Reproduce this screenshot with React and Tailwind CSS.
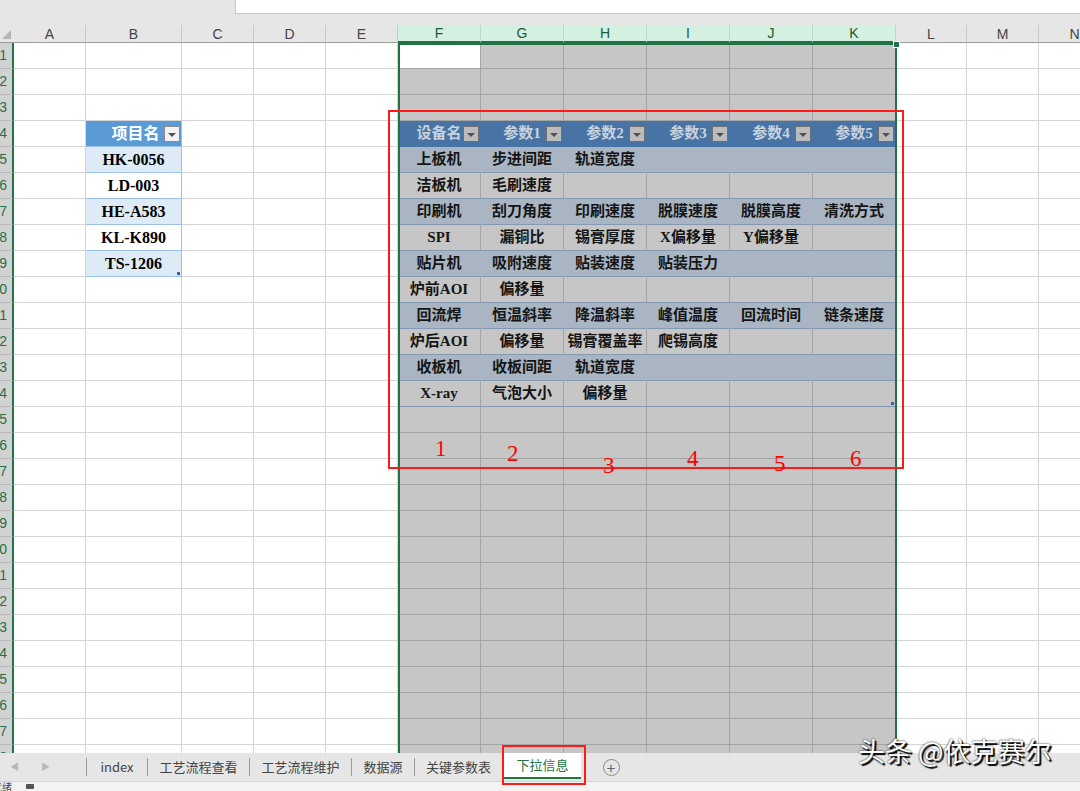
import React from "react";

const cols = [
  { id: "A", w: "w-[72px]" },
  { id: "B", w: "w-[96px]" },
  { id: "C", w: "w-[72px]" },
  { id: "D", w: "w-[72px]" },
  { id: "E", w: "w-[72px]" },
  { id: "F", w: "w-[83px]" },
  { id: "G", w: "w-[83px]" },
  { id: "H", w: "w-[83px]" },
  { id: "I", w: "w-[83px]" },
  { id: "J", w: "w-[83px]" },
  { id: "K", w: "w-[83px]" },
  { id: "L", w: "w-[71px]" },
  { id: "M", w: "w-[72px]" },
  { id: "N", w: "w-[72px]" },
];

const projects = ["HK-0056", "LD-003", "HE-A583", "KL-K890", "TS-1206"];

const params = [
  ["上板机", "步进间距", "轨道宽度"],
  ["洁板机", "毛刷速度"],
  ["印刷机", "刮刀角度", "印刷速度", "脱膜速度", "脱膜高度", "清洗方式"],
  ["SPI", "漏铜比", "锡膏厚度", "X偏移量", "Y偏移量"],
  ["贴片机", "吸附速度", "贴装速度", "贴装压力"],
  ["炉前AOI", "偏移量"],
  ["回流焊", "恒温斜率", "降温斜率", "峰值温度", "回流时间", "链条速度"],
  ["炉后AOI", "偏移量", "锡膏覆盖率", "爬锡高度"],
  ["收板机", "收板间距", "轨道宽度"],
  ["X-ray", "气泡大小", "偏移量"],
];

const paramHeads = ["设备名", "参数1", "参数2", "参数3", "参数4", "参数5"];

const marks = [
  { n: "1", x: "left-[435px]", y: "top-[437px]" },
  { n: "2", x: "left-[507px]", y: "top-[442px]" },
  { n: "3", x: "left-[603px]", y: "top-[454px]" },
  { n: "4", x: "left-[687px]", y: "top-[447px]" },
  { n: "5", x: "left-[774px]", y: "top-[452px]" },
  { n: "6", x: "left-[850px]", y: "top-[447px]" },
];

const tabs = [
  { name: "index", w: "w-[61px]" },
  { name: "工艺流程查看", w: "w-[102px]" },
  { name: "工艺流程维护", w: "w-[102px]" },
  { name: "数据源", w: "w-[63px]" },
  { name: "关键参数表", w: "w-[88px]" },
];

const serif = "font-['Liberation_Serif','Noto_Sans_CJK_SC',serif] font-bold";

const Dropdown = ({ tone }) => (
  <span
    className={`absolute right-[1px] top-[5px] w-[16px] h-[16px] flex items-center justify-center border ${
      tone === "dark"
        ? "bg-[#bcbcbc] border-[#6f6f6f]"
        : "bg-[#f2f2f2] border-[#8a8a8a]"
    }`}
  >
    <span className="w-0 h-0 border-l-[4px] border-r-[4px] border-t-[4px] border-l-transparent border-r-transparent border-t-[#505050] mt-[1px]" />
  </span>
);

const cellFor = (r, c) => {
  const inParam = r >= 4 && r <= 14 && c >= 5 && c <= 10;
  const inProject = r >= 4 && r <= 9 && c === 1;
  const selected = c >= 5 && c <= 10;

  if (inParam) {
    if (r === 4) {
      return {
        cls: "bg-[#4773a5] border-r-[#4773a5] border-b-[#4773a5] text-[#c8d2de] text-[15px]",
        content: (
          <>
            <span className={serif}>{paramHeads[c - 5]}</span>
            <Dropdown tone="dark" />
          </>
        ),
      };
    }
    const text = params[r - 5][c - 5];
    const band = r % 2 === 1;
    return {
      cls: band
        ? "bg-[#a9b5c3] border-r-[#a9b5c3] border-b-[#8399b4] text-[#151515] text-[15px]"
        : "bg-[#c6c6c6] border-r-[#a4a4a4] border-b-[#8399b4] text-[#151515] text-[15px]",
      content: (
        <>
          {text && <span className={`${serif} whitespace-nowrap`}>{text}</span>}
          {r === 14 && c === 10 && (
            <span className="absolute right-[1px] bottom-[1px] w-[3px] h-[3px] bg-[#3f62a8]" />
          )}
        </>
      ),
    };
  }

  if (inProject) {
    if (r === 4) {
      return {
        cls: "bg-[#5b9bd5] border-r-[#9bc2e6] border-b-[#9bc2e6] text-white text-[16px]",
        content: (
          <>
            <span className={`${serif} pl-[4px]`}>项目名</span>
            <Dropdown tone="light" />
          </>
        ),
      };
    }
    return {
      cls: `${r % 2 === 1 ? "bg-[#ddebf7]" : "bg-white"} border-r-[#9bc2e6] border-b-[#9bc2e6] text-black text-[16px]`,
      content: (
        <>
          <span className={serif}>{projects[r - 5]}</span>
          {r === 9 && (
            <span className="absolute right-[1px] bottom-[1px] w-[3px] h-[3px] bg-[#3f62a8]" />
          )}
        </>
      ),
    };
  }

  if (selected && !(r === 1 && c === 5)) {
    return { cls: "bg-[#c6c6c6] border-r-[#a4a4a4] border-b-[#a4a4a4]", content: null };
  }
  if (r === 1 && c === 5) {
    return { cls: "bg-white border-r-[#a4a4a4] border-b-[#a4a4a4]", content: null };
  }
  return { cls: "bg-white border-r-[#d4d4d4] border-b-[#d4d4d4]", content: null };
};

const rows = Array.from({ length: 28 }, (_, i) => i + 1);

export default function App() {
  return (
    <div className="relative w-[1080px] h-[791px] overflow-hidden bg-white flex flex-col font-['Liberation_Sans','Noto_Sans_CJK_SC',sans-serif]">
      {/* formula bar strip */}
      <div className="h-[25px] shrink-0 bg-[#e6e6e6] flex">
        <div className="w-[235px] shrink-0" />
        <div className="flex-1 h-[14px] bg-white border-l border-b border-[#c6c6c6]" />
      </div>

      {/* column headers */}
      <div className="h-[18px] shrink-0 flex bg-[#e6e6e6]">
        <div className="w-[14px] shrink-0 relative border-b border-[#9b9b9b]">
          <span className="absolute right-[3px] bottom-[3px] w-0 h-0 border-l-[9px] border-t-[9px] border-l-transparent border-t-transparent border-b-0 border-r-0 [border-bottom:9px_solid_#b5b5b5]" />
        </div>
        {cols.map((col, i) => {
          const sel = i >= 5 && i <= 10;
          return (
            <div
              key={col.id}
              className={`${col.w} shrink-0 flex items-center justify-center text-[14px] leading-none border-r ${
                sel
                  ? "bg-[#d3f0e0] text-[#1d5a39] border-r-[#bcd9c8] border-b-2 border-b-[#217346]"
                  : "text-[#444] border-r-[#c8c8c8] border-b border-b-[#9b9b9b]"
              }`}
            >
              {col.id}
            </div>
          );
        })}
      </div>

      {/* grid body */}
      <div className="h-[710px] shrink-0 overflow-hidden">
        {rows.map((r) => (
          <div key={r} className="flex h-[26px]">
            <div className="w-[14px] shrink-0 h-full overflow-hidden flex items-center justify-end pr-[5px] bg-[#d2d2d2] border-r-2 border-r-[#217346] border-b border-b-[#b9b9b9] text-[14px] text-[#217346] whitespace-nowrap">
              {r}
            </div>
            {cols.map((col, c) => {
              const { cls, content } = cellFor(r, c);
              return (
                <div
                  key={col.id}
                  className={`${col.w} shrink-0 h-full relative flex items-center justify-center border-r border-b ${cls}`}
                >
                  {content}
                </div>
              );
            })}
          </div>
        ))}
      </div>

      {/* sheet tabs */}
      <div className="h-[28px] shrink-0 bg-[#e6e6e6] flex items-stretch text-[13px] text-[#444] font-['Noto_Sans_CJK_SC','Liberation_Sans',sans-serif]">
        <div className="w-[86px] shrink-0 flex items-center gap-[22px] pl-[10px] text-[9px] text-[#b8b8b8]">
          <span>◀</span>
          <span>▶</span>
        </div>
        {tabs.map((t) => (
          <div
            key={t.name}
            className={`${t.w} shrink-0 flex items-center justify-center my-[5px] border-l border-[#9b9b9b]`}
          >
            {t.name}
          </div>
        ))}
        <div className="w-[77px] shrink-0 ml-[2px] bg-white flex items-center justify-center text-[#217346] border-b-2 border-[#217346] mb-[2px]">
          下拉信息
        </div>
        <div className="w-[60px] flex items-center justify-center">
          <span className="w-[17px] h-[17px] rounded-full border border-[#8a8a8a] flex items-center justify-center text-[#666] text-[15px] leading-none">
            +
          </span>
        </div>
      </div>

      {/* status bar */}
      <div className="h-[10px] shrink-0 bg-[#f3f3f3] border-t border-[#d6d6d6] flex items-center text-[10px] text-[#444] leading-none overflow-hidden font-['Noto_Sans_CJK_SC',sans-serif]">
        <span className="-ml-[8px]">就绪</span>
        <span className="ml-[14px] w-[8px] h-[5px] bg-[#555] rounded-[1px]" />
      </div>

      {/* selection outline of columns F:K */}
      <div className="absolute left-[398px] top-[43px] w-[499px] h-[710px] border-2 border-b-0 border-[#217346] pointer-events-none" />
      <div className="absolute left-[893px] top-[41px] w-[7px] h-[7px] bg-[#217346] border border-white" />

      {/* red annotation box */}
      <div className="absolute left-[388px] top-[110px] w-[516px] h-[359px] border-2 border-[#ff1a1a] pointer-events-none" />
      {marks.map((m) => (
        <span
          key={m.n}
          className={`absolute ${m.x} ${m.y} text-[23px] leading-none text-[#ff0000] font-['Liberation_Serif',serif]`}
        >
          {m.n}
        </span>
      ))}

      {/* red box around active tab */}
      <div className="absolute left-[502px] top-[745px] w-[84px] h-[40px] border-2 border-[#ff1a1a] pointer-events-none" />

      {/* watermark */}
      <div className="absolute left-[858px] top-[737px] text-[27px] leading-none text-white font-['Noto_Sans_CJK_SC',sans-serif] [text-shadow:2px_2px_1px_#000,0_0_2px_#000] whitespace-nowrap">
        头条 @依克赛尔
      </div>
    </div>
  );
}
